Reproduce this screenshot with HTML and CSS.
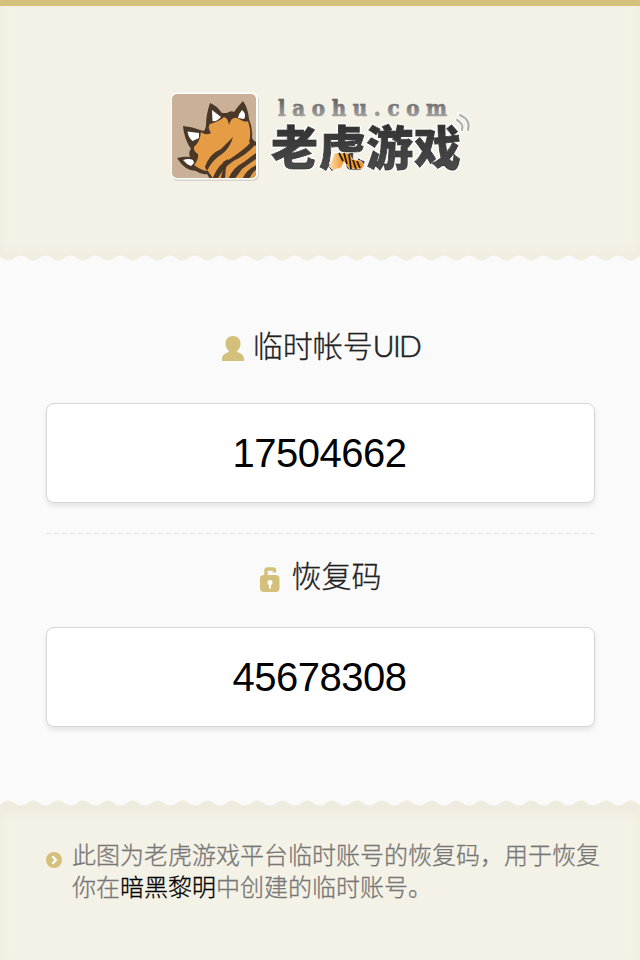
FILE: index.html
```html
<!DOCTYPE html>
<html lang="zh-CN">
<head>
<meta charset="utf-8">
<title>老虎游戏</title>
<link rel="stylesheet" href="styles.css">
</head>
<body>
<main class="page">
  <header class="header">
    <svg class="logo" width="310" height="100" viewBox="165 86 310 100">
      <defs>
        <linearGradient id="ink" x1="0" y1="0" x2="0" y2="1"><stop offset="0" stop-color="#292929"/><stop offset="1" stop-color="#505050"/></linearGradient>
        <linearGradient id="silver" x1="0" y1="0" x2="0" y2="1"><stop offset=".25" stop-color="#666"/><stop offset=".85" stop-color="#a4a4a4"/></linearGradient>
        <linearGradient id="paw" x1="0" x2="1"><stop offset="0" stop-color="#ffe0b0"/><stop offset=".4" stop-color="#ec9a35"/><stop offset="1" stop-color="#ef9424"/></linearGradient>
        <clipPath id="tile"><rect x="172" y="94" width="84" height="84" rx="5"/></clipPath>
        <filter id="halo" x="-5%" y="-10%" width="110%" height="120%"><feMorphology in="SourceAlpha" operator="dilate" radius="1"/><feComponentTransfer><feFuncR type="linear" slope="0" intercept="1"/><feFuncG type="linear" slope="0" intercept="1"/><feFuncB type="linear" slope="0" intercept="1"/></feComponentTransfer><feMerge><feMergeNode/><feMergeNode in="SourceGraphic"/></feMerge></filter>
      </defs>
      <rect x="172" y="94" width="87" height="87" rx="6" fill="#d5d3cb"/>
      <rect x="171" y="92.500" width="87" height="87" rx="6" fill="#fff"/>
      <rect x="172" y="94" width="84" height="84" rx="5" fill="#c9b097"/>
      <g clip-path="url(#tile)">
        <path d="M177 158Q186 156 190 157Q188 152 191 149Q184 139 183 126Q193 127 200 130L204 131Q206 128 206 125Q206 115 210 103Q216 105 222 113L227 113Q231 110 234 112Q238 106 243 101Q248 108 249 119Q253 128 252 138L257 145V182H212L207 174Q201 175 196 171Q185 171 177 158Z" fill="#493727"/>
        <path d="M194 165Q199 159 198 154Q193 151 194 147Q200 142 201 132Q206 136 211 133Q207 127 210 124Q220 121 224 117Q228 118 229 125Q232 115 239 119Q246 123 248 121Q252 133 249 142L254 148V180H214L208 171Q202 171 194 165Z" fill="#e69c45"/>
        <path d="M248 142L260 148V182H214L230 158Z" fill="#e69c45"/>
        <g fill="#fff"><path d="M183 160Q189 158 193 160L194 163L191 166Q186 164 183 160Z"/><path d="M187.500 131.500L199 133L199 138Q195 140 192.500 141Q188 137 187.500 131.500Z"/><path d="M212 110L221 117Q217 122 212.500 121Z"/><path d="M242 110Q247 114 244 119L238 118Q239 113 242 110Z"/></g>
        <g fill="#493727"><path d="M205 167Q209 154 221 149L233 137Q230 148 222 154Q212 160 207 171Z"/><path d="M212 180Q218 163 230 159Q245 149 251 142L258 141Q251 151 239 158Q225 164 217 180Z"/><path d="M220 180Q224 169 223 162L228 159Q225 170 225 180Z"/><path d="M228 180Q232 168 244 162Q253 155 259 151V157Q250 163 242 169L234 180Z"/><path d="M242 180Q246 169 259 164V168Q251 172 249 180Z"/></g>
      </g>
      <text class="domain" x="278" y="116" textLength="169" lengthAdjust="spacing">laohu.com</text>
      <text class="brand" x="271" y="165" textLength="190" filter="url(#halo)">老虎游戏</text>
      <path d="M335 153H349L352 159L361 161L364 165L362 169H350L344 162L341 168L333 170L329 166Z" fill="url(#paw)" stroke="#fff" stroke-width=".6"/>
      <path d="M339 153L343 161M344 153L347 164M349 154L351 169M353 160L356 169M357 161L360 168" fill="none" stroke="#2b1b10" stroke-width="1.800"/>
      <g fill="none" stroke-linecap="round"><path d="M457 120Q464 124 462 131M459 114Q471 120 468 130" stroke="#fff" stroke-width="4"/><path d="M457 120Q464 124 462 130M460 115Q471 120 468 130" stroke="#b0b0b0" stroke-width="2.200"/></g>
    </svg>
  </header>
  <svg class="wave" width="640" height="12" viewBox="0 0 640 12">
    <defs><pattern id="edgeTop" x="8.300" y="0" width="24.900" height="12" patternUnits="userSpaceOnUse"><path d="M0 0H24.900V7.500C20 7.500 17 2.500 12.450 2.500S5 7.500 0 7.500Z" fill="#f1eee1"/></pattern></defs>
    <rect width="640" height="12" fill="url(#edgeTop)"/>
  </svg>
  <section class="codes">
    <h2 class="label uid-label">
      <svg class="user" width="24" height="26" viewBox="0 0 24 26"><path d="M12 0C7.500 0 4.500 3 4.500 7.500C4.500 11 6 13.500 8 15V16C3 17.500 1 19.500 1 23V25H23V23C23 19.500 21 17.500 16 16V15C18 13.500 19.500 11 19.500 7.500C19.500 3 16.500 0 12 0Z" fill="#d3c07b"/></svg>
      <span>临时帐号<span class="latin">UID</span></span>
    </h2>
    <div class="field">17504662</div>
    <svg class="divider" width="549" height="1"><path d="M0 .5H549" stroke="#e2e2e2" stroke-dasharray="5 3"/></svg>
    <h2 class="label code-label">
      <svg class="lock" width="20" height="26" viewBox="0 0 20 26"><path d="M6 11V3.500Q6 2 7.500 2H13Q14.500 2 14.500 3.500V5.500" fill="none" stroke="#d3c07b" stroke-width="3.500"/><rect x="0" y="8" width="19.500" height="17" rx="4" fill="#d3c07b"/><circle cx="10" cy="15.500" r="2.500" fill="#fff"/><path d="M9 16H11V21.500H9Z" fill="#fff"/></svg>
      <span>恢复码</span>
    </h2>
    <div class="field">45678308</div>
  </section>
  <svg class="wave" width="640" height="12" viewBox="0 0 640 12">
    <defs><pattern id="edgeBottom" x="-4.100" y="0" width="24.900" height="12" patternUnits="userSpaceOnUse"><path d="M0 12V7.500C5 7.500 8 2.500 12.450 2.500S20 7.500 24.900 7.500V12Z" fill="#efecdf"/></pattern></defs>
    <rect width="640" height="12" fill="url(#edgeBottom)"/>
  </svg>
  <footer class="footer">
    <svg class="bullet" width="16" height="16" viewBox="0 0 16 16"><circle cx="8" cy="8" r="8" fill="#d3c07b"/><path d="M6.300 4.300L10 8L6.300 11.700" fill="none" stroke="#fff" stroke-width="2.200"/></svg>
    <p class="note">此图为老虎游戏平台临时账号的恢复码，用于恢复<br>你在<span class="game">暗黑黎明</span>中创建的临时账号。</p>
  </footer>
</main>
</body>
</html>
```
FILE: styles.css
```css
* { box-sizing: border-box; }
body {
  margin: 0;
  background: #fafafa;
  font-family: "Liberation Sans", "Noto Sans CJK SC", sans-serif;
}
svg { display: block; flex-shrink: 0; }
.page { width: 640px; height: 960px; overflow: hidden; }
.header {
  height: 253px;
  padding: 80px 165px 0;
  border-top: 6px solid #d3c07b;
  background: #f4f1e6;
  box-shadow: inset 9px 0 9px -7px #eeebde, inset -9px 0 9px -7px #eeebde, inset 0 -9px 9px -7px #f0ede0;
}
.domain {
  font: bold 22px "DejaVu Serif Condensed", "DejaVu Serif", serif;
  fill: url(#silver);
  stroke: url(#silver);
  stroke-width: .7px;
}
.brand {
  font: 900 47px "Noto Sans CJK SC", sans-serif;
  fill: url(#ink);
  stroke: #3a3a3a;
  stroke-width: 1px;
}
.codes { height: 533px; padding: 61px 45px 0 46px; }
.label {
  display: flex;
  justify-content: center;
  margin: 0;
  height: 40px;
  font: 300 30px/36px "Noto Sans CJK SC", sans-serif;
  color: #222;
  -webkit-text-stroke: .3px #222;
  white-space: nowrap;
}
.uid-label { gap: 8px; }
.user { margin-top: 10px; }
.code-label { gap: 12px; margin-top: 23px; line-height: 34px; }
.lock { margin-top: 10px; }
.latin { font: 300 30px/30px Lato, sans-serif; letter-spacing: -1.7px; -webkit-text-stroke: .6px #222; }
.field {
  height: 100px;
  margin-top: 37px;
  padding-right: 2px;
  border: 1px solid #d6d6d6;
  border-radius: 8px;
  background: #fff;
  box-shadow: 0 3px 4px #e5e5e5;
  font-size: 40px;
  line-height: 98px;
  letter-spacing: -.5px;
  text-align: center;
  color: #000;
}
.code-label + .field { margin-top: 30px; }
.divider { margin-top: 30px; }
.footer {
  display: flex;
  height: 150px;
  padding: 30px 0 0 46px;
  gap: 10px;
  background: #f4f1e6;
  box-shadow: inset 9px 0 9px -7px #eeebde, inset -9px 0 9px -7px #eeebde, inset 0 9px 9px -7px #efecdf;
}
.bullet { margin-top: 12px; }
.note {
  margin: -2px 0 0;
  font: 300 24px/32px "Noto Sans CJK SC", sans-serif;
  color: #777;
  -webkit-text-stroke: .3px;
  white-space: nowrap;
}
.game { color: #000; }
```
